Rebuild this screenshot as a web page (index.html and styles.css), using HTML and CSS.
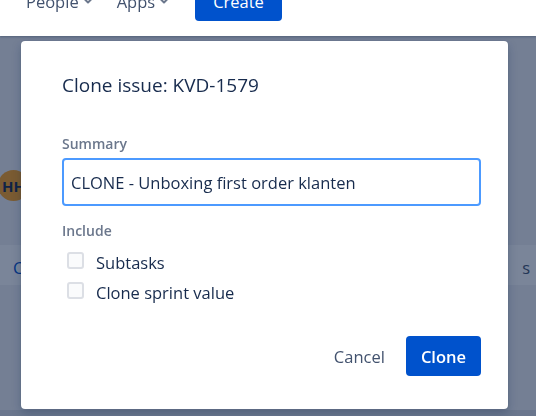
FILE: index.html
```html
<!DOCTYPE html>
<html lang="en">
<head>
    <meta charset="UTF-8">
    <meta name="viewport" content="width=device-width, initial-scale=1.0">
    <title>Clone issue: KVD-1579</title>
    <link rel="stylesheet" href="styles.css">
</head>
<body>
    <div class="page">
        <header class="topbar">
            <a class="nav-item">People
                <svg class="chevron" width="10" height="8" viewBox="0 0 10 8"><path d="M1.5 2l3.5 3.5 3.5-3.5" fill="none" stroke="#6b778c" stroke-width="2" stroke-linecap="round" stroke-linejoin="round"/></svg>
            </a>
            <a class="nav-item">Apps
                <svg class="chevron" width="10" height="8" viewBox="0 0 10 8"><path d="M1.5 2l3.5 3.5 3.5-3.5" fill="none" stroke="#6b778c" stroke-width="2" stroke-linecap="round" stroke-linejoin="round"/></svg>
            </a>
            <button class="create-btn">Create</button>
        </header>

        <main class="content">
            <div class="avatar">HH</div>
            <div class="issue-row">
                <span class="row-link">Child issues</span>
                <span class="row-meta">s</span>
            </div>
        </main>

        <div class="bottom-strip"></div>
    </div>

    <!-- Modal blanket -->
    <div class="blanket"></div>

    <!-- Clone dialog -->
    <section class="modal">
        <h1 class="modal-title">Clone issue: KVD-1579</h1>

        <label class="field-label" for="summary">Summary</label>
        <input class="text-field" id="summary" type="text" value="CLONE - Unboxing first order klanten">

        <div class="field-label include-label">Include</div>
        <label class="check">
            <input type="checkbox">
            <span class="box"></span>
            Subtasks
        </label>
        <label class="check">
            <input type="checkbox">
            <span class="box"></span>
            Clone sprint value
        </label>

        <footer class="modal-footer">
            <button class="btn-subtle">Cancel</button>
            <button class="btn-primary">Clone</button>
        </footer>
    </section>
</body>
</html>
```

FILE: styles.css
```css
/* General Reset */
* {
    margin: 0;
    padding: 0;
    box-sizing: border-box;
}

body {
    font-family: "Open Sans", "Noto Sans", Arial, sans-serif;
    font-size: 16.5px;
    color: #172b4d;
    background-color: #fff;
    overflow: hidden;
}

/* Page behind the dialog */
.page {
    display: flex;
    flex-direction: column;
    height: 100vh;
}

.topbar {
    display: flex;
    align-items: center;
    gap: 24px;
    height: 70px;
    margin-top: -34px;
    padding-left: 26px;
    background-color: #fff;
    box-shadow: 0 1px 2px rgba(9, 30, 66, 0.3);
    position: relative;
    z-index: 1;
}

.nav-item {
    display: flex;
    align-items: center;
    gap: 4px;
    color: #42526e;
    font-weight: 500;
}

.create-btn {
    height: 40px;
    padding: 0 18px;
    margin-left: 2px;
    border: none;
    border-radius: 4px;
    background-color: #0052cc;
    color: #fff;
    font: inherit;
    font-weight: 500;
}

.content {
    flex: 1;
    display: flex;
    flex-direction: column;
    background-color: #f1f2f5;
}

.avatar {
    width: 31px;
    height: 31px;
    margin: 170px 0 0 -2px;
    margin-top: 134px;
    border-radius: 50%;
    background-color: #ffa41f;
    color: #172b4d;
    font-size: 15px;
    font-weight: 700;
    display: flex;
    align-items: center;
    justify-content: center;
}

.issue-row {
    display: flex;
    justify-content: space-between;
    align-items: center;
    height: 40px;
    margin-top: 44px;
    padding: 4px 6px 0 13px;
    background-color: #fff;
}

.row-link {
    color: #0052cc;
}

.row-meta {
    color: #42526e;
}

.bottom-strip {
    height: 6px;
    background-color: #dcdfe5;
}

/* Blanket */
.blanket {
    position: fixed;
    top: 0;
    left: 0;
    width: 100%;
    height: 100%;
    background-color: rgba(9, 30, 66, 0.54);
}

/* Modal */
.modal {
    position: fixed;
    top: 41px;
    left: 21px;
    width: 487px;
    height: 368px;
    padding: 30px 27px 0 41px;
    background-color: #fff;
    border-radius: 4px;
    box-shadow: 0 0 1px rgba(9, 30, 66, 0.3), 0 4px 10px rgba(9, 30, 66, 0.25);
    display: flex;
    flex-direction: column;
}

.modal-title {
    font-size: 19px;
    font-weight: 500;
    line-height: 28px;
    color: #172b4d;
}

.field-label {
    display: block;
    margin-top: 35px;
    font-size: 14px;
    font-weight: 600;
    line-height: 20px;
    color: #6b778c;
}

.include-label {
    margin-top: 15px;
}

.text-field {
    height: 48px;
    margin-top: 4px;
    padding: 0 7px;
    border: 2px solid #4c9aff;
    border-radius: 4px;
    font: inherit;
    color: #172b4d;
    outline: none;
}

/* Checkboxes */
.check {
    display: flex;
    align-items: flex-start;
    gap: 12px;
    height: 30px;
    line-height: 30px;
    padding-left: 5px;
    color: #172b4d;
}

.include-label + .check {
    margin-top: 7px;
}

.check input {
    display: none;
}

.check .box {
    width: 17px;
    height: 17px;
    margin-top: 4px;
    border: 2px solid #dcdfe5;
    border-radius: 3px;
    background-color: #fafbfc;
}

/* Footer buttons */
.modal-footer {
    display: flex;
    justify-content: flex-end;
    gap: 6px;
    margin-top: 28px;
}

.btn-subtle, .btn-primary {
    height: 40px;
    padding: 0 15px;
    border: none;
    border-radius: 4px;
    font: inherit;
    cursor: pointer;
}

.btn-subtle {
    background: none;
    color: #42526e;
    font-weight: 500;
}

.btn-primary {
    background-color: #0052cc;
    color: #fff;
    font-weight: 600;
}

.btn-primary:hover {
    background-color: #0065ff;
}
```
